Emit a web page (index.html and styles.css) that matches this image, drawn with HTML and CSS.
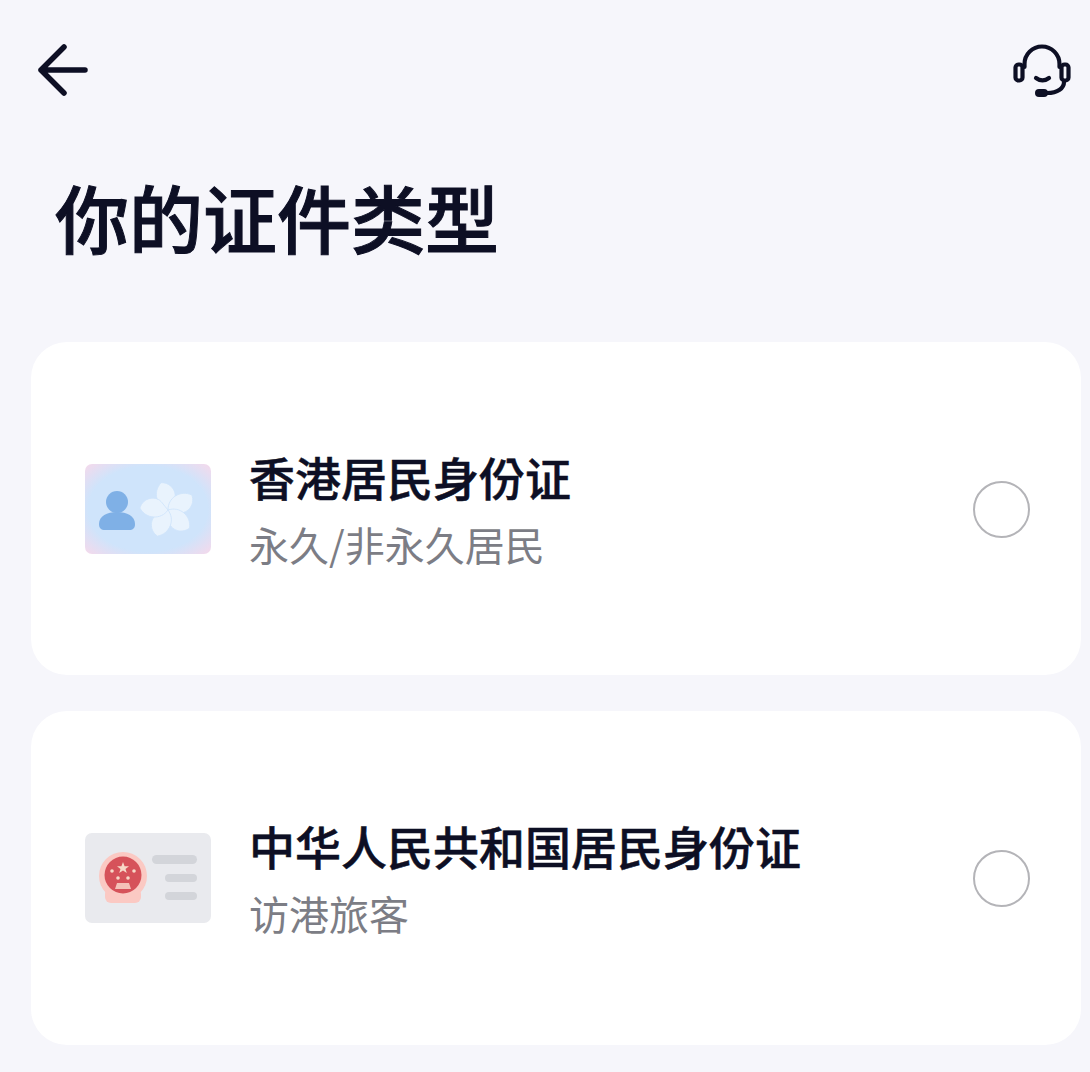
FILE: index.html
```html
<!DOCTYPE html>
<html lang="zh-Hant">
<head>
  <meta charset="UTF-8" />
  <meta name="viewport" content="width=device-width, initial-scale=1.0"/>
  <title>你的证件类型</title>
  <link rel="stylesheet" href="styles.css">
</head>
<body>
  <header class="topbar">
    <svg class="icon-back" width="52" height="54" viewBox="0 0 52 54" fill="none" stroke="#0d0f24" stroke-width="5.5" stroke-linecap="round" stroke-linejoin="round">
      <path d="M48 27H4M27 4L4 27l23 23"/>
    </svg>
    <svg class="icon-support" width="60" height="60" viewBox="0 0 60 60" fill="none" stroke="#0d0f24" stroke-width="4.2" stroke-linecap="round" stroke-linejoin="round">
      <path d="M12.5 24a17.5 17.5 0 0 1 35 0v3M12.5 24v3"/>
      <rect x="3.5" y="24.5" width="7" height="16" rx="3"/>
      <rect x="49.5" y="24.5" width="7" height="16" rx="3"/>
      <path d="M24 38c4 3 9 3 13 0"/>
      <path d="M52 42c0 6-6 11-17 11"/>
      <path d="M27 53h5" stroke-width="8"/>
    </svg>
  </header>

  <h1 class="page-title">你的证件类型</h1>

  <div class="card">
    <svg class="card-pic" width="126" height="90" viewBox="0 0 126 90">
      <defs>
        <radialGradient id="hkBg" cx="50%" cy="50%" r="72%">
          <stop offset="66%" stop-color="#cfe4fb"/>
          <stop offset="100%" stop-color="#f8d8ea"/>
        </radialGradient>
        <path id="petal" d="M0 0C-11 -5 -13 -20 -3 -28C8 -27 13 -14 6 -7C4 -5 2 -2 0 0Z"/>
      </defs>
      <rect width="126" height="90" rx="7" fill="url(#hkBg)"/>
      <circle cx="32" cy="38" r="11" fill="#7fb0e6"/>
      <path d="M14 60c0-8 8-12 18-12s18 4 18 12c0 4-2 6-6 6H20c-4 0-6-2-6-6z" fill="#7fb0e6"/>
      <g fill="#e9f3fd" stroke="#cfe4fb" stroke-width="0.8" transform="translate(83 46)">
        <use href="#petal" transform="rotate(-8)"/>
        <use href="#petal" transform="rotate(64)"/>
        <use href="#petal" transform="rotate(136)"/>
        <use href="#petal" transform="rotate(208)"/>
        <use href="#petal" transform="rotate(280)"/>
      </g>
    </svg>
    <div class="card-text">
      <div class="card-title">香港居民身份证</div>
      <div class="card-sub">永久/非永久居民</div>
    </div>
    <span class="radio"></span>
  </div>

  <div class="card card-tall">
    <svg class="card-pic" width="126" height="90" viewBox="0 0 126 90">
      <rect width="126" height="90" rx="7" fill="#e9eaee"/>
      <circle cx="38" cy="43" r="24" fill="#fbc9c3"/>
      <rect x="20" y="55" width="36" height="15" rx="6" fill="#fbc9c3"/>
      <circle cx="38" cy="42" r="18.5" fill="#d6525a"/>
      <path d="M38 29l1.6 4.2h4.4l-3.5 2.7 1.3 4.2-3.8-2.5-3.8 2.5 1.3-4.2-3.5-2.7h4.4z" fill="#f7d9c8"/>
      <circle cx="27" cy="38" r="1.8" fill="#f7d9c8"/>
      <circle cx="49" cy="38" r="1.8" fill="#f7d9c8"/>
      <circle cx="33" cy="45" r="1.8" fill="#f7d9c8"/>
      <circle cx="43" cy="45" r="1.8" fill="#f7d9c8"/>
      <path d="M30 56l2-6h12l2 6z" fill="#f4c2b8"/>
      <rect x="67" y="22" width="45" height="9" rx="4.5" fill="#d3d5da"/>
      <rect x="80" y="41" width="32" height="8" rx="4" fill="#d3d5da"/>
      <rect x="80" y="59" width="32" height="8" rx="4" fill="#d3d5da"/>
    </svg>
    <div class="card-text">
      <div class="card-title">中华人民共和国居民身份证</div>
      <div class="card-sub">访港旅客</div>
    </div>
    <span class="radio"></span>
  </div>
</body>
</html>
```

FILE: styles.css
```css
body {
  margin: 0;
  background: #f6f6fb;
  font-family: "Noto Sans CJK SC", "Noto Sans", sans-serif;
  overflow: hidden;
}

.topbar {
  display: flex;
  justify-content: space-between;
  align-items: center;
  padding: 40px 18px 0 37px;
}

.page-title {
  margin: 66px 0 0 55px;
  font-size: 74px;
  line-height: 100px;
  font-weight: 500;
  -webkit-text-stroke: 1px #0d0f24;
  color: #0d0f24;
}

.card {
  display: flex;
  align-items: center;
  box-sizing: border-box;
  width: 1050px;
  height: 333px;
  margin: 36px 0 0 31px;
  padding: 0 51px 0 54px;
  background: #ffffff;
  border-radius: 36px;
}

.card-tall {
  height: 334px;
}

.page-title + .card {
  margin-top: 76px;
}

.card-pic {
  flex: none;
  filter: blur(0.7px);
}

.card-text {
  flex: 1;
  margin-left: 38px;
  padding-bottom: 2px;
}

.card-title {
  font-size: 46px;
  line-height: 64px;
  font-weight: 500;
  -webkit-text-stroke: 0.5px #0d0f24;
  color: #0d0f24;
}

.card-sub {
  margin-top: 8px;
  font-size: 40px;
  line-height: 56px;
  color: #7c7d85;
}

.radio {
  flex: none;
  box-sizing: border-box;
  width: 57px;
  height: 57px;
  margin-top: 1px;
  border: 2.5px solid #b4b4b8;
  border-radius: 50%;
}
```
